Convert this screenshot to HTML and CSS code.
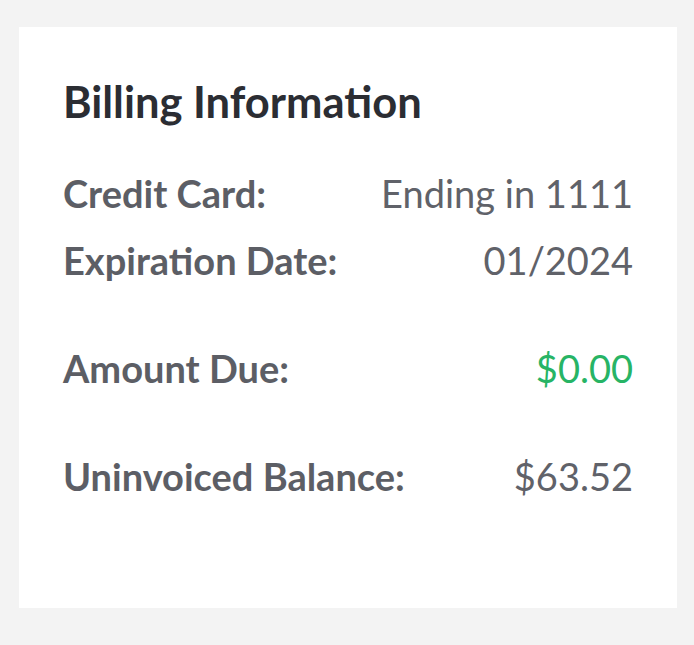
FILE: index.html
```html
<!DOCTYPE html>
<html lang="en">
<head>
<meta charset="utf-8">
<title>Billing Information</title>
<link rel="stylesheet" href="styles.css">
</head>
<body>
<section class="card">
  <h2 class="card-title">Billing Information</h2>
  <div class="group">
    <div class="row"><span class="label">Credit Card:</span><span class="value">Ending in 1111</span></div>
    <div class="row"><span class="label">Expiration Date:</span><span class="value">01/2024</span></div>
  </div>
  <div class="group">
    <div class="row"><span class="label">Amount Due:</span><span class="value value-green">$0.00</span></div>
  </div>
  <div class="group">
    <div class="row"><span class="label">Uninvoiced Balance:</span><span class="value">$63.52</span></div>
  </div>
</section>
</body>
</html>
```

FILE: styles.css
```css
html, body {
  margin: 0;
  padding: 0;
  background: #f3f3f3;
}
body {
  padding: 27px 17px 37px 19px;
  font-family: Lato, "Open Sans", sans-serif;
}
.card {
  background: #ffffff;
  height: 581px;
  box-sizing: border-box;
  padding: 49px 44px 0 44px;
}
.card-title {
  margin: 0;
  font-size: 43.5px;
  line-height: 50px;
  font-weight: 700;
  color: #2b2d33;
}
.group {
  margin-top: 34px;
}
.group + .group {
  margin-top: 41px;
}
.row {
  display: flex;
  justify-content: space-between;
  font-size: 38px;
  line-height: 67px;
}
.label {
  font-weight: 700;
  color: #5c5e65;
}
.value {
  font-weight: 400;
  color: #606269;
}
.value-green {
  color: #27b465;
}
```
